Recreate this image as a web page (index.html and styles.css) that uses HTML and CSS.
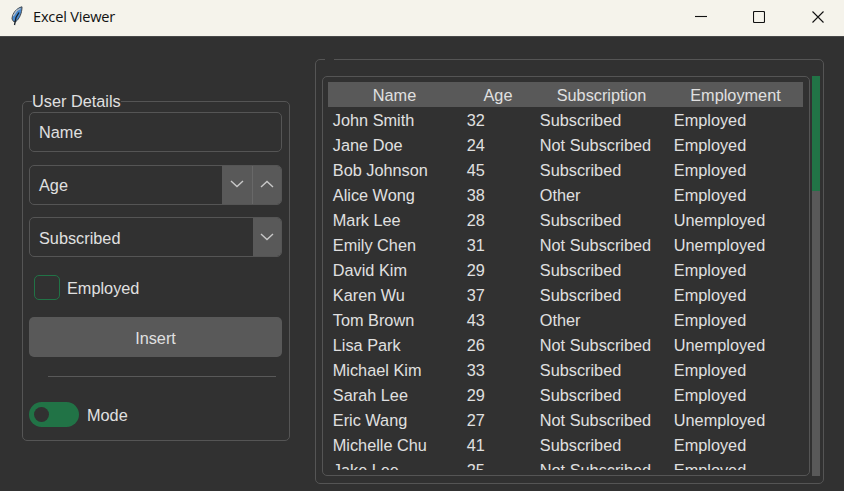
FILE: index.html
```html
<!DOCTYPE html>
<html lang="en">
<head>
<meta charset="utf-8">
<title>Excel Viewer</title>
<link rel="stylesheet" href="styles.css">
</head>
<body>
<header class="titlebar">
  <svg class="feather" width="14" height="20" viewBox="0 0 14 20"><path d="M12 .8C7 2 2.2 7 2 13l1.5 2.5 2.2.2C9.5 12.8 12 7 12 .8Z" fill="#4889cf" stroke="#46494d"/><path d="M10.5 2.5 6.5 4.8 3.2 10" fill="none" stroke="#b8bec4" stroke-width="1.3"/><path d="M9 6.5 6 11.5 4.5 19" fill="none" stroke="#17202a" stroke-width="1.3"/></svg>
  <h1>Excel Viewer</h1>
  <div class="controls">
    <svg width="12" height="12" viewBox="0 0 12 12"><path d="M0 5.5h12"/></svg>
    <svg width="12" height="12" viewBox="0 0 12 12"><rect x=".5" y=".5" width="11" height="11" rx="1"/></svg>
    <svg width="12" height="12" viewBox="0 0 12 12"><path d="M.5.5l11 11M11.5.5l-11 11"/></svg>
  </div>
</header>
<main>
  <section class="details">
    <span class="legend">User Details</span>
    <div class="field">Name</div>
    <div class="field"><span>Age</span>
      <div class="spin"><svg width="14" height="8" viewBox="0 0 14 8"><path d="M1 1l6 5.5L13 1"/></svg></div>
      <div class="spin last"><svg width="14" height="8" viewBox="0 0 14 8"><path d="M1 7l6-5.5L13 7"/></svg></div>
    </div>
    <div class="field combo"><span>Subscribed</span>
      <div class="spin last"><svg width="14" height="8" viewBox="0 0 14 8"><path d="M1 1l6 5.5L13 1"/></svg></div>
    </div>
    <label class="check"><i></i>Employed</label>
    <button>Insert</button>
    <hr>
    <label class="mode"><i></i>Mode</label>
  </section>
  <section class="viewer">
    <div class="tree">
      <div class="row head"><b>Name</b><b>Age</b><b>Subscription</b><b>Employment</b></div>
      <div class="row"><span>John Smith</span><span>32</span><span>Subscribed</span><span>Employed</span></div>
      <div class="row"><span>Jane Doe</span><span>24</span><span>Not Subscribed</span><span>Employed</span></div>
      <div class="row"><span>Bob Johnson</span><span>45</span><span>Subscribed</span><span>Employed</span></div>
      <div class="row"><span>Alice Wong</span><span>38</span><span>Other</span><span>Employed</span></div>
      <div class="row"><span>Mark Lee</span><span>28</span><span>Subscribed</span><span>Unemployed</span></div>
      <div class="row"><span>Emily Chen</span><span>31</span><span>Not Subscribed</span><span>Unemployed</span></div>
      <div class="row"><span>David Kim</span><span>29</span><span>Subscribed</span><span>Employed</span></div>
      <div class="row"><span>Karen Wu</span><span>37</span><span>Subscribed</span><span>Employed</span></div>
      <div class="row"><span>Tom Brown</span><span>43</span><span>Other</span><span>Employed</span></div>
      <div class="row"><span>Lisa Park</span><span>26</span><span>Not Subscribed</span><span>Unemployed</span></div>
      <div class="row"><span>Michael Kim</span><span>33</span><span>Subscribed</span><span>Employed</span></div>
      <div class="row"><span>Sarah Lee</span><span>29</span><span>Subscribed</span><span>Employed</span></div>
      <div class="row"><span>Eric Wang</span><span>27</span><span>Not Subscribed</span><span>Unemployed</span></div>
      <div class="row"><span>Michelle Chu</span><span>41</span><span>Subscribed</span><span>Employed</span></div>
      <div class="row cut"><span>Jake Lee</span><span>25</span><span>Not Subscribed</span><span>Employed</span></div>
    </div>
    <div class="scroll"><div class="thumb"></div></div>
  </section>
</main>
</body>
</html>
```
FILE: styles.css
```css
* { box-sizing: border-box; }
body {
  margin: 0;
  height: 491px;
  overflow: hidden;
  background: #313131;
  color: #e0e0e0;
  font: 16.3px/20px "Liberation Sans", Arial, sans-serif;
}
svg { display: block; fill: none; }
.titlebar {
  height: 36px;
  display: flex;
  align-items: center;
  padding: 0 20px 2px 10px;
  background: #f5f3eb;
  color: #111;
}
.feather { margin-top: -2px; }
h1 {
  margin: -2px auto 0 9px;
  font: 14.6px/20px "Open Sans", "Noto Sans", sans-serif;
  letter-spacing: -0.2px;
}
.controls { display: flex; gap: 46px; stroke: #111; stroke-width: 1.1; }
.controls svg:last-child { margin-left: 1px; }
main {
  display: flex;
  align-items: flex-start;
  gap: 25px;
  height: 455px;
  padding: 22px 0 0 22px;
  border-top: 1px solid #484848;
}
.details {
  position: relative;
  display: flex;
  flex-direction: column;
  width: 268px;
  height: 340px;
  margin-top: 42px;
  padding: 10px 7px 0 6px;
  border: 1px solid #555;
  border-radius: 5px;
}
.legend {
  position: absolute;
  left: 9px;
  top: -11px;
  background: #313131;
}
.field {
  display: flex;
  align-items: center;
  height: 40px;
  margin-bottom: 13px;
  padding-left: 9px;
  border: 1px solid #555;
  border-radius: 5px;
}
.combo { margin-top: -1px; }
.field span { flex: 1; }
.combo span { padding-top: 2px; }
.spin {
  width: 31px;
  height: 100%;
  padding: 14px 0 0 8px;
  background: #595959;
  border-right: 1px solid #686868;
}
.spin.last { width: 28px; border: 0; border-radius: 0 4px 4px 0; padding-left: 7px; }
.combo .spin { padding-top: 15px; }
.spin svg { stroke: #c8c8c8; stroke-width: 1.4; }
.check {
  display: flex;
  align-items: center;
  gap: 7px;
  height: 25px;
  margin: 5px 0 17px 5px;
}
.check i { width: 26px; height: 25px; border: 1px solid #217346; border-radius: 5px; }
button {
  height: 40px;
  padding: 2px 0 0;
  border: 0;
  border-radius: 5px;
  background: #595959;
  color: inherit;
  font: inherit;
}
hr { width: 228px; height: 1px; margin: 19px 0 25px 19px; border: 0; background: #595959; }
.mode { display: flex; align-items: center; gap: 8px; height: 25px; }
.mode i { width: 50px; height: 25px; padding: 5px; border-radius: 13px; background: #217346; }
.mode i::before { content: ""; display: block; width: 15px; height: 15px; border-radius: 50%; background: #313131; }
.viewer {
  position: relative;
  display: flex;
  gap: 2px;
  width: 509px;
  height: 425px;
  padding: 16px 3px 0 6px;
  border: 1px solid #555;
  border-radius: 5px;
}
.viewer::before {
  content: "";
  position: absolute;
  top: -1px;
  left: 9px;
  width: 9px;
  height: 1px;
  background: #313131;
}
.tree {
  width: 488px;
  height: 400px;
  padding: 5px;
  border: 1px solid #555;
  border-radius: 5px;
}
.row {
  display: grid;
  grid-template-columns: 134px 73px 134px 134px;
  height: 25px;
  line-height: 26px;
  white-space: nowrap;
}
.row span { padding-left: 4.8px; }
.head { width: 475px; background: #595959; }
.head b { font-weight: normal; text-align: center; transform: translateX(-0.5px); }
.cut { height: 13px; overflow: hidden; }
.scroll { width: 8px; height: 400px; background: #595959; }
.thumb { height: 115px; background: #217346; }
```
